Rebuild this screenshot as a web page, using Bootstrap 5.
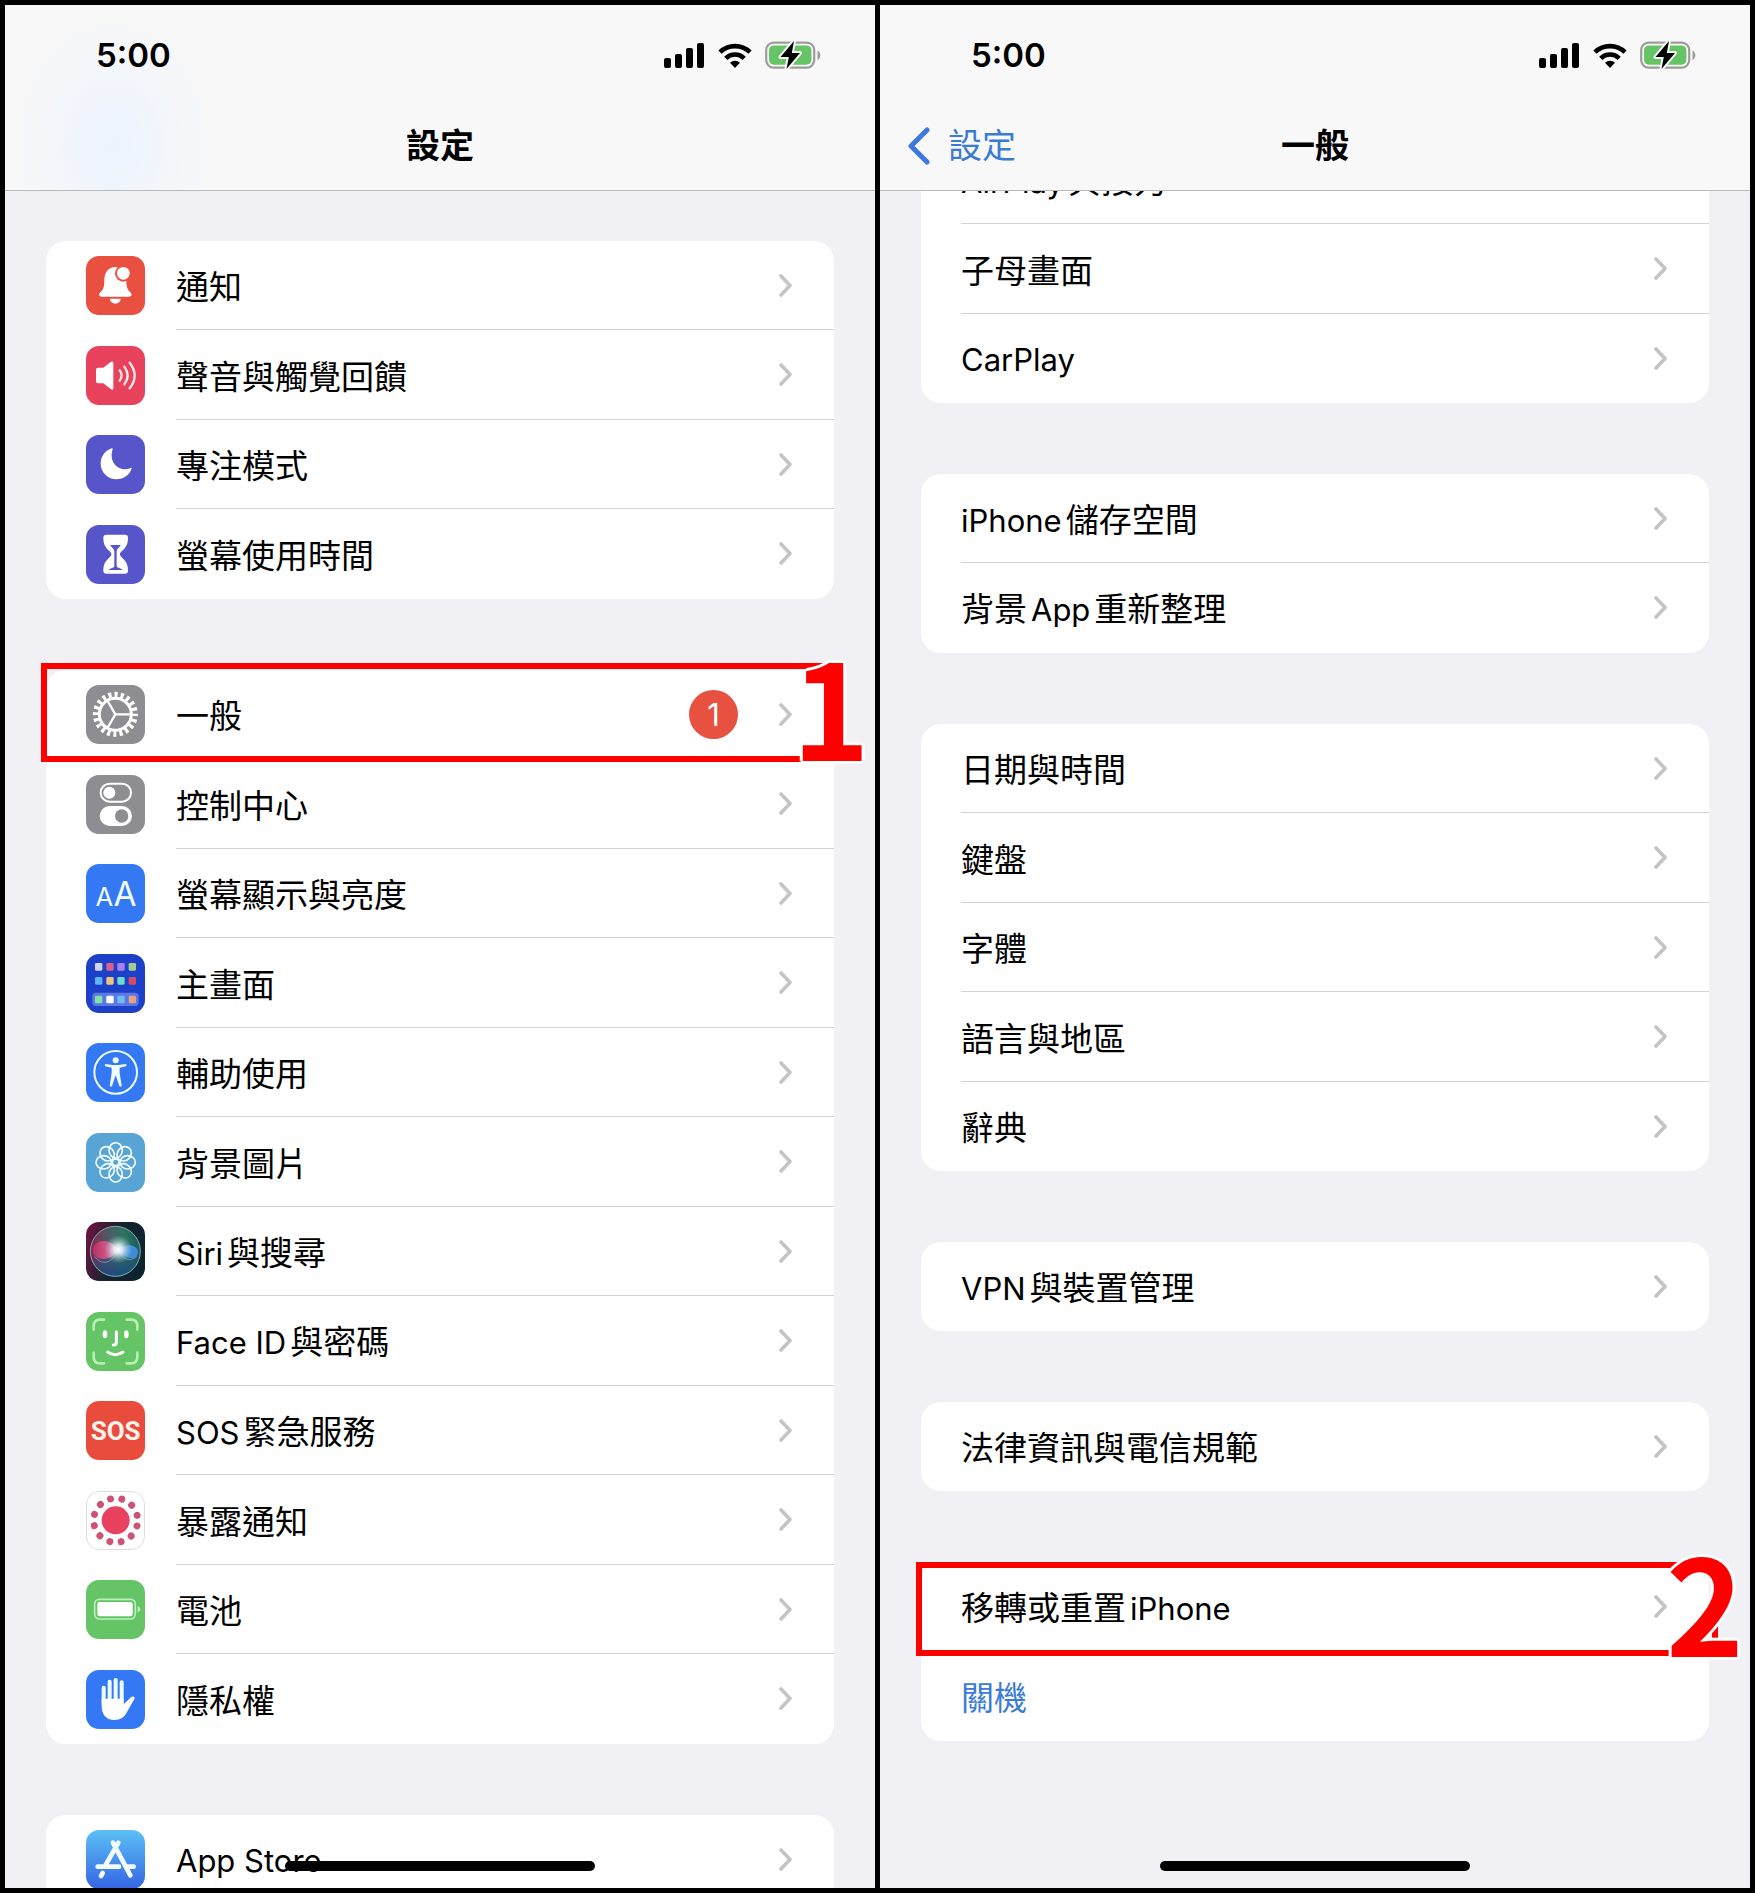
<!DOCTYPE html>
<html lang="zh-Hant">
<head>
<meta charset="utf-8">
<meta name="viewport" content="width=device-width, initial-scale=1">
<title>設定 › 一般</title>
<link rel="stylesheet" href="https://cdn.jsdelivr.net/npm/bootstrap@5.3.0/dist/css/bootstrap.min.css">
<style>
body{background:#000;font-family:Inter,"Noto Sans CJK TC",sans-serif;color:#000}
.stage{height:100vh;padding:5px;gap:5px}
.phone{flex:1 1 0;min-width:0;background:#f0f0f5}
.topbar{height:186px;z-index:3;border-bottom:1px solid #b9babd;background:#f8f8f8;padding:30px 54px 0 91px}
.topbar.tint{background:radial-gradient(ellipse 100px 130px at 108px 140px,#ecf3fe,#f8f8f8 100%)}
.clock{font-size:33px;font-weight:600;line-height:40px}
.status{gap:13px}
.titlebar{inset:113px 0 auto 0;height:56px}
.titlebar h1{font-size:34px;font-weight:600;line-height:56px}
.backlink{left:27px;top:0;height:56px;gap:18px;font-size:34px;line-height:56px;color:#3a7bd5}
.content{padding:236px 41px 0;gap:71px}
.content.scrolled{padding-top:130px}
.cards{--bs-list-group-border-radius:20px;background:#fff;border-radius:20px}
.entry{height:89px;padding:0 0 0 40px;background:transparent;color:#000;font-size:33px;line-height:40px}
.entry:nth-child(even){height:90px}
.entry:hover,.entry:focus{background:transparent;color:#000}
.entry .tile{width:59px;height:59px;border-radius:13px;margin-right:31px;flex:none;overflow:hidden}
.entry .line{border-bottom:1px solid #d3d3d6;padding-right:42px;min-width:0}
.entry .line>.flex-grow-1{padding-top:4px}
.entry:last-child .line,.entry.marked .line{border-bottom-color:transparent}
.lt{font-size:31px}
.chev{width:13px;height:23px;flex:none}
.count{width:49px;height:49px;margin-right:41px;background:#e8503f;font-size:31px;line-height:49px;color:#fff}
.entry.poweroff{color:#3a7bd5}
.ring{border:6px solid #f00;z-index:1;pointer-events:none}
.ring-1{inset:-7px -7px -3px -5px}
.ring-2{inset:0 -9px -5px -5px}
.step{z-index:2;font-family:"Noto Sans CJK TC",sans-serif;font-size:132px;font-weight:700;line-height:132px;color:#f00;text-shadow:3px 0 #fff,-3px 0 #fff,0 3px #fff,0 -3px #fff,2px 2px #fff,-2px 2px #fff,2px -2px #fff,-2px -2px #fff;pointer-events:none}
.step-1{right:-36px;top:-32px}
.step-2{right:-35px;top:-28px}
.homebar{width:310px;height:10px;border-radius:5px;background:#000;bottom:17px;z-index:4}
</style>
</head>
<body>
<svg width="0" height="0" class="position-absolute" aria-hidden="true">
  <defs>
    <symbol id="chev" viewBox="0 0 13 23"><path d="M2 2l9 9.500-9 9.500" fill="none" stroke="#c4c4c7" stroke-width="3.600" stroke-linecap="round" stroke-linejoin="round"/></symbol>
    <symbol id="signal" viewBox="0 0 41 25"><rect x="0" y="15" width="7" height="10" rx="2"/><rect x="11" y="11" width="7" height="14" rx="2"/><rect x="22" y="5" width="7" height="20" rx="2"/><rect x="33" y="0" width="7" height="25" rx="2"/></symbol>
    <symbol id="wifi" viewBox="0 0 34 25"><g fill="none" stroke="#000" stroke-width="4.600"><path d="M2 9.200a21.500 21.500 0 0 1 30 0"/><path d="M7.800 15.300a13.200 13.200 0 0 1 18.400 0"/></g><path d="M17 25l-5-5.200a7.200 7.200 0 0 1 10 0z"/></symbol>
    <symbol id="power" viewBox="0 0 56 28"><rect x="1.200" y="1.600" width="48" height="25" rx="7.500" fill="none" stroke="#9b9d9b" stroke-width="2.200"/><rect x="4" y="4.400" width="42.400" height="19.400" rx="5" fill="#67c466"/><path d="M52.500 9.500c3.800 1.600 3.800 7.800 0 9.400z" fill="#9b9d9b"/><path d="M29 0L15.500 16h8.300L21.500 28 35 12h-8.200z" fill="#000" stroke="#f8f8f8" stroke-width="4" stroke-linejoin="round" paint-order="stroke"/></symbol>
  </defs>
</svg>

<main class="stage d-flex">
  <section class="phone position-relative overflow-hidden" aria-label="設定">
    <header class="topbar tint position-absolute top-0 start-0 end-0">
      <div class="d-flex justify-content-between align-items-center">
        <span class="clock">5:00</span>
        <span class="status d-flex align-items-center">
          <svg width="41" height="25"><use href="#signal"/></svg>
          <svg width="34" height="25"><use href="#wifi"/></svg>
          <svg width="56" height="28"><use href="#power"/></svg>
        </span>
      </div>
      <div class="titlebar position-absolute text-center"><h1 class="m-0">設定</h1></div>
    </header>

    <div class="content d-flex flex-column">
      <nav class="cards list-group">
        <a href="#" class="entry list-group-item list-group-item-action border-0 d-flex align-items-center">
          <svg class="tile" viewBox="0 0 177 177"><rect width="177" height="177" fill="#e9503f"/><path d="M88 33c-19 0-33 16-33 39 0 22-3 28-12 37-6 6-4 13 4 13h82c8 0 10-7 4-13-9-9-12-15-12-37 0-23-14-39-33-39zM72 128h32a16 15 0 0 1-32 0z" fill="#fff"/><circle cx="112" cy="52" r="25" fill="#e9503f"/><circle cx="112" cy="52" r="19" fill="#fff"/></svg>
          <span class="line d-flex flex-grow-1 align-items-center align-self-stretch"><span class="flex-grow-1">通知</span><svg class="chev"><use href="#chev"/></svg></span>
        </a>
        <a href="#" class="entry list-group-item list-group-item-action border-0 d-flex align-items-center">
          <svg class="tile" viewBox="0 0 177 177"><rect width="177" height="177" fill="#e8425c"/><path d="M36 65h16l22-17q8-5 8 4v74q0 8-8 3L52 112H36q-6 0-6-6V71q0-6 6-6z" fill="#fff"/><g fill="none" stroke="#ffe8ec" stroke-width="7" stroke-linecap="round"><path d="M101 73q12 15 0 31M115 62q20 27 0 53M131 50q30 38 0 77"/></g></svg>
          <span class="line d-flex flex-grow-1 align-items-center align-self-stretch"><span class="flex-grow-1">聲音與觸覺回饋</span><svg class="chev"><use href="#chev"/></svg></span>
        </a>
        <a href="#" class="entry list-group-item list-group-item-action border-0 d-flex align-items-center">
          <svg class="tile" viewBox="0 0 177 177"><rect width="177" height="177" fill="#5655ca"/><path d="M77 40C55 48 44 66 44 86c0 26 22 47 48 47 20 0 39-12 45-33 0-2-1-2-3-1-30 13-60-10-57-42q1-9 3-15 0-3-3-2z" fill="#fff"/></svg>
          <span class="line d-flex flex-grow-1 align-items-center align-self-stretch"><span class="flex-grow-1">專注模式</span><svg class="chev"><use href="#chev"/></svg></span>
        </a>
        <a href="#" class="entry list-group-item list-group-item-action border-0 d-flex align-items-center">
          <svg class="tile" viewBox="0 0 177 177"><rect width="177" height="177" fill="#5655ca"/><path d="M61 29h56q9 0 9 9c0 20-6 29-19 41-7 6-7 12 0 18 13 12 19 21 19 40q0 9-9 9H61q-9 0-9-9c0-19 6-28 19-40 7-6 7-12 0-18-13-12-19-21-19-41q0-9 9-9z" fill="#fff"/><path d="M73 60h31c-3 8-12 11-12 19v45c0 5 15 6 18 11H68c3-5 17-6 17-11V79c0-8-9-11-12-19z" fill="#5655ca"/></svg>
          <span class="line d-flex flex-grow-1 align-items-center align-self-stretch"><span class="flex-grow-1">螢幕使用時間</span><svg class="chev"><use href="#chev"/></svg></span>
        </a>
      </nav>

      <nav class="cards list-group">
        <a href="#" class="entry marked list-group-item list-group-item-action border-0 d-flex align-items-center">
          <svg class="tile" viewBox="0 0 177 177"><rect width="177" height="177" fill="#8e8d92"/><g fill="none" stroke="#fff"><circle cx="88" cy="88" r="48" stroke-width="9"/><circle cx="88" cy="88" r="59" stroke-width="17" pathLength="200" stroke-dasharray="5 5" stroke-dashoffset="2"/><path d="M88 88h46M88 88L65 48M88 88l-23 40" stroke-width="7"/></g></svg>
          <span class="line d-flex flex-grow-1 align-items-center align-self-stretch"><span class="flex-grow-1">一般</span><span class="count badge rounded-circle p-0 fw-normal">1</span><svg class="chev"><use href="#chev"/></svg></span>
          <span class="ring ring-1 position-absolute"></span><span class="step step-1 position-absolute">1</span>
        </a>
        <a href="#" class="entry list-group-item list-group-item-action border-0 d-flex align-items-center">
          <svg class="tile" viewBox="0 0 177 177"><rect width="177" height="177" fill="#8e8d92"/><rect x="44" y="26" width="91" height="54" rx="27" fill="none" stroke="#fff" stroke-width="6"/><circle cx="70" cy="53" r="18" fill="#fff"/><rect x="41" y="93" width="97" height="60" rx="30" fill="#fff"/><circle cx="107" cy="123" r="20" fill="#8e8d92"/></svg>
          <span class="line d-flex flex-grow-1 align-items-center align-self-stretch"><span class="flex-grow-1">控制中心</span><svg class="chev"><use href="#chev"/></svg></span>
        </a>
        <a href="#" class="entry list-group-item list-group-item-action border-0 d-flex align-items-center">
          <svg class="tile" viewBox="0 0 177 177"><rect width="177" height="177" fill="#3478f3"/><g fill="#eefcff" font-family="Inter,sans-serif" font-weight="400" text-anchor="middle"><text x="55" y="125" font-size="77">A</text><text x="117" y="125" font-size="100">A</text></g></svg>
          <span class="line d-flex flex-grow-1 align-items-center align-self-stretch"><span class="flex-grow-1">螢幕顯示與亮度</span><svg class="chev"><use href="#chev"/></svg></span>
        </a>
        <a href="#" class="entry list-group-item list-group-item-action border-0 d-flex align-items-center">
          <svg class="tile" viewBox="0 0 177 177"><rect width="177" height="177" fill="#1d40c9"/><rect x="19" y="116" width="139" height="40" rx="11" fill="#5b78e3"/><rect x="27" y="27" width="22" height="23" rx="4" fill="#ced6f2"/><rect x="61" y="27" width="22" height="23" rx="4" fill="#dd5f8d"/><rect x="94" y="27" width="22" height="23" rx="4" fill="#a77ff8"/><rect x="128" y="27" width="22" height="23" rx="4" fill="#a4cd8c"/><rect x="27" y="69" width="22" height="23" rx="4" fill="#5db4f7"/><rect x="61" y="69" width="22" height="23" rx="4" fill="#efc37c"/><rect x="94" y="69" width="22" height="23" rx="4" fill="#70dac9"/><rect x="128" y="69" width="22" height="23" rx="4" fill="#d84b68"/><rect x="27" y="125" width="22" height="23" rx="4" fill="#83e1a6"/><rect x="61" y="125" width="22" height="23" rx="4" fill="#fff"/><rect x="94" y="125" width="22" height="23" rx="4" fill="#6fbdf8"/><rect x="128" y="125" width="22" height="23" rx="4" fill="#e2a283"/></svg>
          <span class="line d-flex flex-grow-1 align-items-center align-self-stretch"><span class="flex-grow-1">主畫面</span><svg class="chev"><use href="#chev"/></svg></span>
        </a>
        <a href="#" class="entry list-group-item list-group-item-action border-0 d-flex align-items-center">
          <svg class="tile" viewBox="0 0 177 177"><rect width="177" height="177" fill="#3478f3"/><circle cx="89" cy="88" r="64" fill="none" stroke="#eefcff" stroke-width="6"/><circle cx="89" cy="52" r="9" fill="#eefcff"/><path d="M58 63l23 3h16l23-3q4 4 0 7l-19 4v16l6 38q-2 5-7 1L90 99h-2l-10 30q-5 4-7-1l6-38V74l-19-4q-4-3 0-7z" fill="#eefcff"/></svg>
          <span class="line d-flex flex-grow-1 align-items-center align-self-stretch"><span class="flex-grow-1">輔助使用</span><svg class="chev"><use href="#chev"/></svg></span>
        </a>
        <a href="#" class="entry list-group-item list-group-item-action border-0 d-flex align-items-center">
          <svg class="tile" viewBox="0 0 177 177"><rect width="177" height="177" fill="#58a5d5"/><g fill="none" stroke="#f2fdff" stroke-width="5"><circle cx="89" cy="88" r="10"/><ellipse cx="89" cy="52" rx="20" ry="23"/><ellipse cx="89" cy="52" rx="20" ry="23" transform="rotate(45 89 88)"/><ellipse cx="89" cy="52" rx="20" ry="23" transform="rotate(90 89 88)"/><ellipse cx="89" cy="52" rx="20" ry="23" transform="rotate(135 89 88)"/><ellipse cx="89" cy="52" rx="20" ry="23" transform="rotate(180 89 88)"/><ellipse cx="89" cy="52" rx="20" ry="23" transform="rotate(225 89 88)"/><ellipse cx="89" cy="52" rx="20" ry="23" transform="rotate(270 89 88)"/><ellipse cx="89" cy="52" rx="20" ry="23" transform="rotate(315 89 88)"/></g></svg>
          <span class="line d-flex flex-grow-1 align-items-center align-self-stretch"><span class="flex-grow-1">背景圖片</span><svg class="chev"><use href="#chev"/></svg></span>
        </a>
        <a href="#" class="entry list-group-item list-group-item-action border-0 d-flex align-items-center">
          <svg class="tile" viewBox="0 0 177 177"><defs><linearGradient id="s1" x1="0" y1=".2" x2="1" y2=".5"><stop offset="0" stop-color="#6a1440"/><stop offset=".5" stop-color="#17222f"/><stop offset="1" stop-color="#0c2430"/></linearGradient><radialGradient id="s2"><stop offset="0" stop-color="#fff"/><stop offset=".3" stop-color="#f1f8fd" stop-opacity=".85"/><stop offset="1" stop-color="#9fd0d8" stop-opacity="0"/></radialGradient><linearGradient id="s3" x1="0" y1="0" x2="1" y2="0"><stop offset="0" stop-color="#c22f66"/><stop offset=".6" stop-color="#ea5a8e"/><stop offset="1" stop-color="#e8a3c4"/></linearGradient><linearGradient id="s4" x1="0" y1="0" x2="1" y2="0"><stop offset="0" stop-color="#8a2450"/><stop offset=".35" stop-color="#4f5a66"/><stop offset=".65" stop-color="#2d7560"/><stop offset="1" stop-color="#1d5a62"/></linearGradient><linearGradient id="s5" x1="0" y1="0" x2="0" y2="1"><stop offset=".5" stop-color="#1d3f73" stop-opacity="0"/><stop offset="1" stop-color="#1d4a80"/></linearGradient></defs><rect width="177" height="177" fill="url(#s1)"/><circle cx="88" cy="88" r="75" fill="url(#s4)"/><circle cx="88" cy="88" r="75" fill="url(#s5)" stroke="#7fb0a8" stroke-width="3"/><path d="M96 84C78 50 28 46 20 82c-4 32 52 44 76 2z" fill="url(#s3)" opacity=".85"/><path d="M96 84c20-22 58-18 60 6 0 26-42 24-60-6z" fill="#4391e6" opacity=".9"/><path d="M26 104c30 36 58 8 70-20 16 30 34 36 56 20" fill="none" stroke="#a9b9e0" stroke-width="3" opacity=".6"/><circle cx="97" cy="82" r="42" fill="url(#s2)"/></svg>
          <span class="line d-flex flex-grow-1 align-items-center align-self-stretch"><span class="flex-grow-1"><span class="lt me-1">Siri</span>與搜尋</span><svg class="chev"><use href="#chev"/></svg></span>
        </a>
        <a href="#" class="entry list-group-item list-group-item-action border-0 d-flex align-items-center">
          <svg class="tile" viewBox="0 0 177 177"><rect width="177" height="177" fill="#65c466"/><g fill="none" stroke-linecap="round"><path d="M23 53V42q0-19 19-19h12M122 23h13q19 0 19 19v11M154 122v13q0 19-19 19h-13M54 154H42q-19 0-19-19v-13" stroke="#b5f0b2" stroke-width="8"/><path d="M91 59v32q0 8-9 8M65 120q23 16 46 0" stroke="#fff" stroke-width="9"/></g><ellipse cx="57" cy="67" rx="7" ry="12" fill="#fff"/><ellipse cx="121" cy="67" rx="7" ry="12" fill="#fff"/></svg>
          <span class="line d-flex flex-grow-1 align-items-center align-self-stretch"><span class="flex-grow-1"><span class="lt me-1">Face ID</span>與密碼</span><svg class="chev"><use href="#chev"/></svg></span>
        </a>
        <a href="#" class="entry list-group-item list-group-item-action border-0 d-flex align-items-center">
          <svg class="tile" viewBox="0 0 177 177"><rect width="177" height="177" fill="#e94c3d"/><text x="89" y="117" text-anchor="middle" font-family="Roboto,sans-serif" font-weight="700" font-size="78" fill="#fff3ee">SOS</text></svg>
          <span class="line d-flex flex-grow-1 align-items-center align-self-stretch"><span class="flex-grow-1"><span class="lt me-1">SOS</span>緊急服務</span><svg class="chev"><use href="#chev"/></svg></span>
        </a>
        <a href="#" class="entry list-group-item list-group-item-action border-0 d-flex align-items-center">
          <svg class="tile" viewBox="0 0 177 177"><rect x="1.500" y="1.500" width="174" height="174" rx="38" fill="#fff" stroke="#dcdce0" stroke-width="3"/><circle cx="89" cy="88" r="42" fill="#e84260"/><circle cx="89" cy="88" r="66" fill="none" stroke="#cc5374" stroke-width="21" stroke-linecap="round" pathLength="360" stroke-dasharray="0.010 29.990" stroke-dashoffset="-15"/></svg>
          <span class="line d-flex flex-grow-1 align-items-center align-self-stretch"><span class="flex-grow-1">暴露通知</span><svg class="chev"><use href="#chev"/></svg></span>
        </a>
        <a href="#" class="entry list-group-item list-group-item-action border-0 d-flex align-items-center">
          <svg class="tile" viewBox="0 0 177 177"><rect width="177" height="177" fill="#65c466"/><rect x="26" y="58" width="122" height="59" rx="14" fill="none" stroke="#b8f0b8" stroke-width="5"/><rect x="34" y="66" width="106" height="43" rx="7" fill="#fff"/><path d="M155 78q8 2 8 10t-8 10z" fill="#b8f0b8"/></svg>
          <span class="line d-flex flex-grow-1 align-items-center align-self-stretch"><span class="flex-grow-1">電池</span><svg class="chev"><use href="#chev"/></svg></span>
        </a>
        <a href="#" class="entry list-group-item list-group-item-action border-0 d-flex align-items-center">
          <svg class="tile" viewBox="0 0 177 177"><rect width="177" height="177" fill="#3478f6"/><path d="M53 53v45M71 35v60M89 30v60M107 37v60" stroke="#eefcff" stroke-width="12" stroke-linecap="round"/><path d="M47 86v22c0 26 14 42 37 42 20 0 31-8 39-24l22-39c3-7-4-10-10-5l-22 21V86z" fill="#fff"/></svg>
          <span class="line d-flex flex-grow-1 align-items-center align-self-stretch"><span class="flex-grow-1">隱私權</span><svg class="chev"><use href="#chev"/></svg></span>
        </a>
      </nav>

      <nav class="cards list-group">
        <a href="#" class="entry list-group-item list-group-item-action border-0 d-flex align-items-center">
          <svg class="tile" viewBox="0 0 177 177"><defs><linearGradient id="st" x1="0" y1="0" x2="0" y2="1"><stop offset="0" stop-color="#5bc0f5"/><stop offset="1" stop-color="#3565e4"/></linearGradient></defs><rect width="177" height="177" fill="url(#st)"/><g fill="none" stroke="#f2fbff" stroke-width="14" stroke-linecap="round"><path d="M97 38L59 105M81 38l52 98M35 110h64M123 110h20M50 129l-5 9"/></g></svg>
          <span class="line d-flex flex-grow-1 align-items-center align-self-stretch"><span class="lt flex-grow-1">App Store</span><svg class="chev"><use href="#chev"/></svg></span>
        </a>
      </nav>
    </div>
    <div class="homebar position-absolute start-50 translate-middle-x"></div>
  </section>

  <section class="phone position-relative overflow-hidden" aria-label="一般">
    <header class="topbar position-absolute top-0 start-0 end-0">
      <div class="d-flex justify-content-between align-items-center">
        <span class="clock">5:00</span>
        <span class="status d-flex align-items-center">
          <svg width="41" height="25"><use href="#signal"/></svg>
          <svg width="34" height="25"><use href="#wifi"/></svg>
          <svg width="56" height="28"><use href="#power"/></svg>
        </span>
      </div>
      <div class="titlebar position-absolute text-center">
        <a href="#" class="backlink position-absolute d-flex align-items-center text-decoration-none"><svg width="23" height="38" viewBox="0 0 23 38"><path d="M20 3L4 19l16 16" fill="none" stroke="#3b78e0" stroke-width="5" stroke-linecap="round" stroke-linejoin="round"/></svg>設定</a>
        <h1 class="m-0">一般</h1>
      </div>
    </header>

    <div class="content scrolled d-flex flex-column">
      <nav class="cards list-group">
        <a href="#" class="entry list-group-item list-group-item-action border-0 d-flex"><span class="line d-flex flex-grow-1 align-items-center"><span class="flex-grow-1"><span class="lt me-1">AirPlay</span>與接力</span><svg class="chev"><use href="#chev"/></svg></span></a>
        <a href="#" class="entry list-group-item list-group-item-action border-0 d-flex"><span class="line d-flex flex-grow-1 align-items-center"><span class="flex-grow-1">子母畫面</span><svg class="chev"><use href="#chev"/></svg></span></a>
        <a href="#" class="entry list-group-item list-group-item-action border-0 d-flex"><span class="line d-flex flex-grow-1 align-items-center"><span class="lt flex-grow-1">CarPlay</span><svg class="chev"><use href="#chev"/></svg></span></a>
      </nav>
      <nav class="cards list-group">
        <a href="#" class="entry list-group-item list-group-item-action border-0 d-flex"><span class="line d-flex flex-grow-1 align-items-center"><span class="flex-grow-1"><span class="lt me-1">iPhone</span>儲存空間</span><svg class="chev"><use href="#chev"/></svg></span></a>
        <a href="#" class="entry list-group-item list-group-item-action border-0 d-flex"><span class="line d-flex flex-grow-1 align-items-center"><span class="flex-grow-1">背景<span class="lt ms-1 me-1">App</span>重新整理</span><svg class="chev"><use href="#chev"/></svg></span></a>
      </nav>
      <nav class="cards list-group">
        <a href="#" class="entry list-group-item list-group-item-action border-0 d-flex"><span class="line d-flex flex-grow-1 align-items-center"><span class="flex-grow-1">日期與時間</span><svg class="chev"><use href="#chev"/></svg></span></a>
        <a href="#" class="entry list-group-item list-group-item-action border-0 d-flex"><span class="line d-flex flex-grow-1 align-items-center"><span class="flex-grow-1">鍵盤</span><svg class="chev"><use href="#chev"/></svg></span></a>
        <a href="#" class="entry list-group-item list-group-item-action border-0 d-flex"><span class="line d-flex flex-grow-1 align-items-center"><span class="flex-grow-1">字體</span><svg class="chev"><use href="#chev"/></svg></span></a>
        <a href="#" class="entry list-group-item list-group-item-action border-0 d-flex"><span class="line d-flex flex-grow-1 align-items-center"><span class="flex-grow-1">語言與地區</span><svg class="chev"><use href="#chev"/></svg></span></a>
        <a href="#" class="entry list-group-item list-group-item-action border-0 d-flex"><span class="line d-flex flex-grow-1 align-items-center"><span class="flex-grow-1">辭典</span><svg class="chev"><use href="#chev"/></svg></span></a>
      </nav>
      <nav class="cards list-group">
        <a href="#" class="entry list-group-item list-group-item-action border-0 d-flex"><span class="line d-flex flex-grow-1 align-items-center"><span class="flex-grow-1"><span class="lt me-1">VPN</span>與裝置管理</span><svg class="chev"><use href="#chev"/></svg></span></a>
      </nav>
      <nav class="cards list-group">
        <a href="#" class="entry list-group-item list-group-item-action border-0 d-flex"><span class="line d-flex flex-grow-1 align-items-center"><span class="flex-grow-1">法律資訊與電信規範</span><svg class="chev"><use href="#chev"/></svg></span></a>
      </nav>
      <nav class="cards list-group">
        <a href="#" class="entry marked list-group-item list-group-item-action border-0 d-flex"><span class="line d-flex flex-grow-1 align-items-center"><span class="flex-grow-1">移轉或重置<span class="lt ms-1">iPhone</span></span><svg class="chev"><use href="#chev"/></svg></span><span class="ring ring-2 position-absolute"></span><span class="step step-2 position-absolute">2</span></a>
        <a href="#" class="entry poweroff list-group-item list-group-item-action border-0 d-flex"><span class="line d-flex flex-grow-1 align-items-center"><span class="flex-grow-1">關機</span></span></a>
      </nav>
    </div>
    <div class="homebar position-absolute start-50 translate-middle-x"></div>
  </section>
</main>
<script src="https://cdn.jsdelivr.net/npm/bootstrap@5.3.0/dist/js/bootstrap.bundle.min.js"></script>
</body>
</html>
